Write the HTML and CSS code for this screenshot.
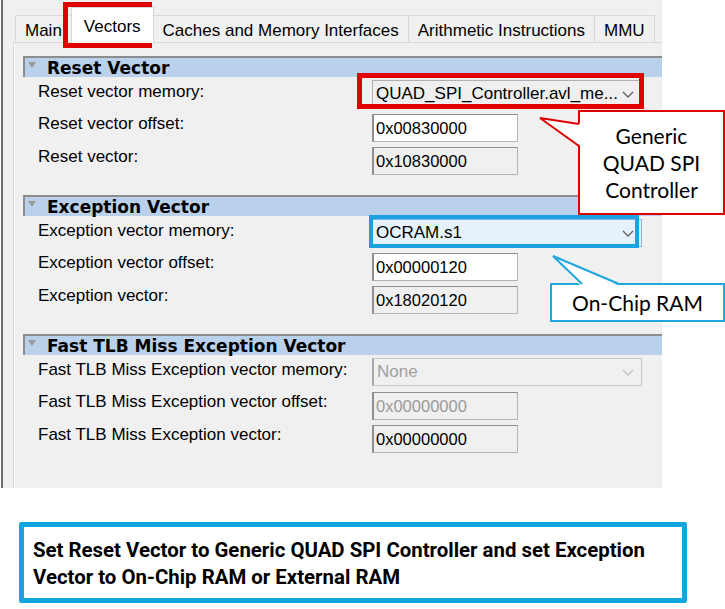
FILE: index.html
```html
<!DOCTYPE html>
<html lang="en">
<head>
    <meta charset="UTF-8">
    <title>Vectors</title>
    <link rel="stylesheet" href="styles.css">
</head>
<body>
<div class="page">
    <!-- Settings window -->
    <div class="window">
        <div class="tabs">
            <span class="tab">Main</span>
            <span class="tab active">Vectors</span>
            <span class="tab">Caches and Memory Interfaces</span>
            <span class="tab">Arithmetic Instructions</span>
            <span class="tab">MMU</span>
        </div>
        <div class="pane">
            <section class="group">
                <div class="group-head"><span class="arrow"></span>Reset Vector</div>
                <div class="row row-combo">
                    <span class="label">Reset vector memory:</span>
                    <div class="combo">
                        <span>QUAD_SPI_Controller.avl_me...</span>
                        <svg class="chev" width="12" height="7" viewBox="0 0 12 7"><polyline points="1,1 6,6 11,1" /></svg>
                    </div>
                </div>
                <div class="row">
                    <span class="label">Reset vector offset:</span>
                    <div class="field">0x00830000</div>
                </div>
                <div class="row">
                    <span class="label">Reset vector:</span>
                    <div class="field readonly">0x10830000</div>
                </div>
            </section>

            <section class="group">
                <div class="group-head"><span class="arrow"></span>Exception Vector</div>
                <div class="row row-combo">
                    <span class="label">Exception vector memory:</span>
                    <div class="combo hover">
                        <span>OCRAM.s1</span>
                        <svg class="chev" width="12" height="7" viewBox="0 0 12 7"><polyline points="1,1 6,6 11,1" /></svg>
                    </div>
                </div>
                <div class="row">
                    <span class="label">Exception vector offset:</span>
                    <div class="field">0x00000120</div>
                </div>
                <div class="row">
                    <span class="label">Exception vector:</span>
                    <div class="field readonly">0x18020120</div>
                </div>
            </section>

            <section class="group">
                <div class="group-head"><span class="arrow"></span>Fast TLB Miss Exception Vector</div>
                <div class="row row-combo">
                    <span class="label">Fast TLB Miss Exception vector memory:</span>
                    <div class="combo disabled">
                        <span>None</span>
                        <svg class="chev" width="12" height="7" viewBox="0 0 12 7"><polyline points="1,1 6,6 11,1" /></svg>
                    </div>
                </div>
                <div class="row">
                    <span class="label">Fast TLB Miss Exception vector offset:</span>
                    <div class="field disabled">0x00000000</div>
                </div>
                <div class="row">
                    <span class="label">Fast TLB Miss Exception vector:</span>
                    <div class="field readonly">0x00000000</div>
                </div>
            </section>
        </div>
    </div>

    <!-- Caption -->
    <div class="note">Set Reset Vector to Generic QUAD SPI Controller and set Exception Vector to On-Chip RAM or External RAM</div>

    <!-- Annotations over the screenshot -->
    <div class="mark mark-tab"></div>
    <div class="mark mark-reset"></div>
    <div class="mark mark-exc"></div>
    <div class="callout callout-red">Generic<br>QUAD SPI<br>Controller</div>
    <div class="callout callout-blue">On-Chip RAM</div>
    <svg class="tails" width="725" height="609" viewBox="0 0 725 609">
        <polygon points="582,124 540,118 582,147" fill="#fff" />
        <polyline points="579,124 540,118 579,146" fill="none" stroke="#e00000" stroke-width="2" />
        <polygon points="581,286 553,256 620,286" fill="#fff" />
        <polyline points="582,284 553,256 619,284" fill="none" stroke="#1fa7e0" stroke-width="2" />
    </svg>
</div>
</body>
</html>
```

FILE: styles.css
```css
* {
    margin: 0;
    padding: 0;
    box-sizing: border-box;
}

body {
    font-family: "Liberation Sans", Arial, sans-serif;
    background-color: #fff;
    color: #000;
}

.page {
    position: relative;
    width: 725px;
    height: 609px;
    overflow: hidden;
}

/* Window */
.window {
    display: flex;
    flex-direction: column;
    width: 661px;
    height: 488px;
    margin-left: 1px;
    border-left: 2px solid #6b6b6b;
    background-color: #f0f0f0;
}

.tabs {
    display: flex;
    align-items: flex-end;
    height: 42px;
    padding-left: 12px;
    font-size: 17px;
}

.tab {
    height: 27px;
    padding: 3px 9px 0;
    line-height: 23px;
    margin-right: -1px;
    border: 1px solid #d9d9d9;
    border-bottom: none;
    background-color: #f0f0f0;
    white-space: nowrap;
}

.tab.active {
    position: relative;
    z-index: 1;
    height: 36px;
    padding: 9px 12px 0;
    line-height: 20px;
    margin-bottom: -1px;
    background-color: #fff;
}

.pane {
    flex: 1;
    margin-left: 10px;
    padding: 13px 0 0 9px;
    border-top: 1px solid #d9d9d9;
    border-left: 1px solid #d9d9d9;
    box-shadow: inset 1px 0 #fff;
}

/* Groups */
.group {
    margin-bottom: 20px;
}

.group-head {
    display: flex;
    align-items: center;
    height: 21px;
    background-color: #b9d1ea;
    border-top: 2px solid #8d8d8d;
    border-left: 2px solid #8d8d8d;
    font-family: "DejaVu Sans", sans-serif;
    font-weight: bold;
    font-size: 17px;
}

.arrow {
    align-self: flex-start;
    width: 0;
    height: 0;
    margin: 4px 11px 0 3px;
    border-left: 4px solid transparent;
    border-right: 4px solid transparent;
    border-top: 6px solid #9a9a9a;
}

.row {
    display: flex;
    height: 28px;
    margin-top: 5px;
    padding-left: 15px;
}

.row-combo {
    margin-top: 3px;
}

.row-combo + .row {
    margin-top: 6px;
}

.label {
    width: 334px;
    font-size: 17px;
    line-height: 20px;
    white-space: nowrap;
}

.row-combo .label {
    padding-top: 2px;
}

.field {
    width: 146px;
    height: 28px;
    padding-left: 2px;
    background-color: #fff;
    border: 1px solid #b4b4b4;
    border-left: 2px solid #8f8f8f;
    border-top-color: #8f8f8f;
    font-size: 16.5px;
    line-height: 26px;
}

.field.readonly {
    background-color: #f0f0f0;
}

.field.disabled {
    background-color: #f0f0f0;
    color: #9a9a9a;
}

.combo {
    display: flex;
    align-items: center;
    justify-content: space-between;
    width: 270px;
    height: 28px;
    padding: 0 7px 0 3px;
    background-color: #efefef;
    border: 1px solid #b0b0b0;
    font-size: 17px;
    white-space: nowrap;
}

.combo.hover {
    background-color: #e5f1fb;
    border-color: #7eb4ea;
}

.combo.disabled {
    background-color: #f0f0f0;
    border-color: #c8c8c8;
    border-left: 2px solid #a8a8a8;
    color: #a0a0a0;
}

.chev polyline {
    fill: none;
    stroke: #606060;
    stroke-width: 1.3;
}

.combo.disabled .chev polyline {
    stroke: #c0c0c0;
}

/* Caption box */
.note {
    width: 668px;
    height: 81px;
    margin: 34px 0 0 19px;
    padding: 10px 0 0 9px;
    border: 5px solid #12a6df;
    border-radius: 2px;
    font-family: Roboto, sans-serif;
    font-weight: bold;
    font-size: 20.4px;
    line-height: 27px;
}

/* Annotations */
.mark {
    position: absolute;
    border: 5px solid #e00000;
}

.mark-tab {
    left: 63px;
    top: 2px;
    width: 89px;
    height: 46px;
}

.mark-reset {
    left: 357px;
    top: 73px;
    width: 287px;
    height: 36px;
}

.mark-exc {
    left: 369px;
    top: 215px;
    width: 270px;
    height: 33px;
    border: 4px solid #1ba1e2;
}

.callout {
    position: absolute;
    display: flex;
    align-items: center;
    justify-content: center;
    text-align: center;
    background-color: #fff;
    font-family: Lato, sans-serif;
    font-size: 21px;
    line-height: 27px;
}

.callout-red {
    left: 578px;
    top: 110px;
    width: 147px;
    height: 105px;
    border: 2px solid #e00000;
}

.callout-blue {
    left: 550px;
    top: 283px;
    width: 175px;
    height: 39px;
    border: 2px solid #1fa7e0;
}

.tails {
    position: absolute;
    left: 0;
    top: 0;
    pointer-events: none;
}
```
